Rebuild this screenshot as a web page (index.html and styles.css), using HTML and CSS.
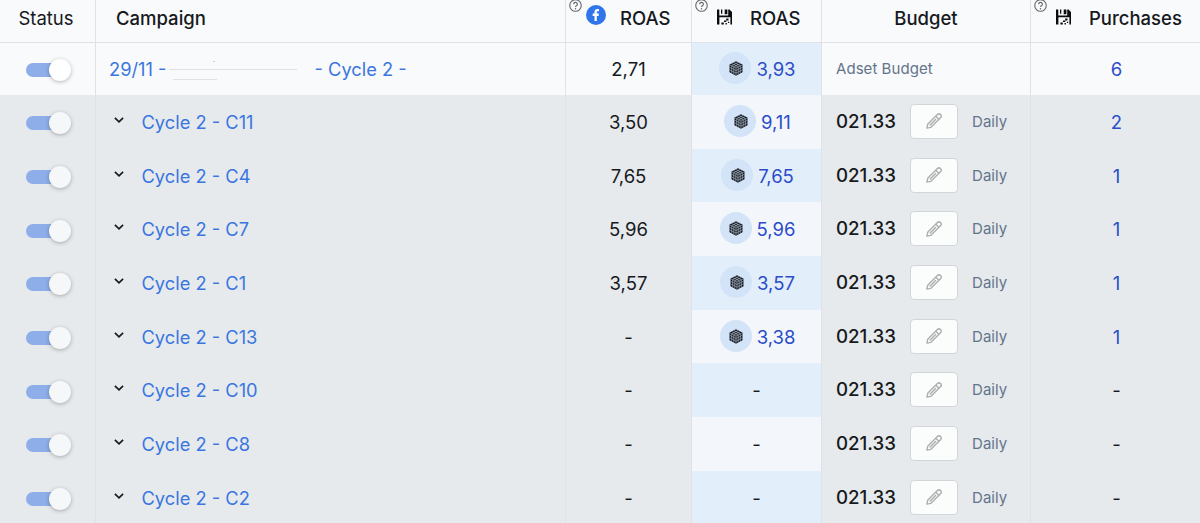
FILE: index.html
```html
<!DOCTYPE html>
<html lang="en">
<head>
    <meta charset="UTF-8">
    <meta name="viewport" content="width=device-width, initial-scale=1.0">
    <title>Campaigns</title>
    <link rel="stylesheet" href="styles.css">
</head>
<body>
    <svg class="sprite" aria-hidden="true">
        <symbol id="help" viewBox="0 0 14 14">
            <circle cx="7" cy="7" r="6.2" fill="none" stroke="currentColor" stroke-width="1.2"/>
            <path d="M5 5.600a2 2 0 1 1 3 1.700c-.7.4-1 .7-1 1.400" fill="none" stroke="currentColor" stroke-width="1.3"/>
            <circle cx="7" cy="10.400" r=".8" fill="currentColor"/>
        </symbol>
        <symbol id="facebook" viewBox="0 0 20 20">
            <circle cx="10" cy="10" r="10" fill="#3076ea"/>
            <path d="M8.500 16V10.900H6.700V8.600H8.500V7.200C8.500 5.100 9.600 4.100 11.500 4.100c.6 0 1.200.1 1.500.2v2h-1.100c-.8 0-1.100.4-1.100 1.100v1.200h2.100l-.35 2.300H10.800V16z" fill="#fff"/>
        </symbol>
        <symbol id="floppy" viewBox="0 0 15 16">
            <path d="M0 .5h2.300v6h8.900v-6h1.300L15 3v12.500h-1.600V8.200H2.400v7.300H0z" fill="#0b0c0e"/>
            <path d="M4 .5h1.300v4.200H4zM7.700.5h2.700v4.700H7.700zM9.200 9.600h2.300v2H9.200zM7 11.400h2.300v1.700H7zM4.400 13.500h2.400v2H4.400zM8.500 14h1.400v1.500H8.500zM10.900 12.800h1.300v1.200h-1.300z" fill="#0b0c0e"/>
        </symbol>
        <symbol id="cube" viewBox="0 0 14 15">
            <path d="M7 .3 13.500 3.600v7.700L7 14.700.5 11.300V3.600z" fill="#14181d"/>
            <path d="M.5 3.700 7 7l6.500-3.300M7 7v7.700M2.700 2.500 9.200 5.900v7.700M11.300 2.500 4.800 5.900v7.700M4.800 1.400l6.500 3.400v7.700M9.200 1.400 2.700 4.800v7.700M.5 6.200 7 9.500l6.500-3.300M.5 8.800 7 12.100l6.500-3.300" fill="none" stroke="#cbdcf3" stroke-width=".5"/>
        </symbol>
        <symbol id="pencil" viewBox="0 0 18 18">
            <path d="M1.900 16.100 2.700 12.300 12.400 2.600a2.150 2.150 0 0 1 3.100 3.100L5.700 15.400zM10.800 4.200l3.100 3.100M5.200 12.900l5.400-5.400" fill="none" stroke="currentColor" stroke-width="1.4" stroke-linejoin="round" stroke-linecap="round"/>
        </symbol>
        <symbol id="chevron" viewBox="0 0 10 6">
            <path d="M.9.900l4.100 3.900L9.100.9" fill="none" stroke="currentColor" stroke-width="1.700"/>
        </symbol>
    </svg>

    <div class="table">
        <div class="row header">
            <div class="cell status">Status</div>
            <div class="cell campaign">Campaign</div>
            <div class="cell fb-roas">
                <svg class="help"><use href="#help"/></svg>
                <svg class="fb-icon"><use href="#facebook"/></svg>
                <span>ROAS</span>
            </div>
            <div class="cell roas">
                <svg class="help"><use href="#help"/></svg>
                <svg class="floppy"><use href="#floppy"/></svg>
                <span>ROAS</span>
            </div>
            <div class="cell budget">Budget</div>
            <div class="cell purchases">
                <svg class="help"><use href="#help"/></svg>
                <svg class="floppy"><use href="#floppy"/></svg>
                <span>Purchases</span>
            </div>
        </div>

        <div class="row parent">
            <div class="cell status"><span class="toggle"></span></div>
            <div class="cell campaign">
                <a>29/11 -</a>
                <svg class="redacted" viewBox="0 0 130 24"><path d="M0 12.500h128M4 22.500h44" stroke="#dfe2e5"/><path d="M44 4.500h2" stroke="#c9ccd0"/></svg>
                <a>- Cycle 2 -</a>
            </div>
            <div class="cell fb-roas">2,71</div>
            <div class="cell roas"><span class="badge"><svg><use href="#cube"/></svg></span><a>3,93</a></div>
            <div class="cell budget"><span class="note">Adset Budget</span></div>
            <div class="cell purchases"><a>6</a></div>
        </div>

        <div class="row">
            <div class="cell status"><span class="toggle"></span></div>
            <div class="cell campaign"><svg class="chevron"><use href="#chevron"/></svg><a>Cycle 2 - C11</a></div>
            <div class="cell fb-roas">3,50</div>
            <div class="cell roas"><span class="badge"><svg><use href="#cube"/></svg></span><a>9,11</a></div>
            <div class="cell budget"><span class="amount">021.33</span><button class="edit"><svg><use href="#pencil"/></svg></button><span class="note">Daily</span></div>
            <div class="cell purchases"><a>2</a></div>
        </div>

        <div class="row">
            <div class="cell status"><span class="toggle"></span></div>
            <div class="cell campaign"><svg class="chevron"><use href="#chevron"/></svg><a>Cycle 2 - C4</a></div>
            <div class="cell fb-roas">7,65</div>
            <div class="cell roas"><span class="badge"><svg><use href="#cube"/></svg></span><a>7,65</a></div>
            <div class="cell budget"><span class="amount">021.33</span><button class="edit"><svg><use href="#pencil"/></svg></button><span class="note">Daily</span></div>
            <div class="cell purchases"><a>1</a></div>
        </div>

        <div class="row">
            <div class="cell status"><span class="toggle"></span></div>
            <div class="cell campaign"><svg class="chevron"><use href="#chevron"/></svg><a>Cycle 2 - C7</a></div>
            <div class="cell fb-roas">5,96</div>
            <div class="cell roas"><span class="badge"><svg><use href="#cube"/></svg></span><a>5,96</a></div>
            <div class="cell budget"><span class="amount">021.33</span><button class="edit"><svg><use href="#pencil"/></svg></button><span class="note">Daily</span></div>
            <div class="cell purchases"><a>1</a></div>
        </div>

        <div class="row">
            <div class="cell status"><span class="toggle"></span></div>
            <div class="cell campaign"><svg class="chevron"><use href="#chevron"/></svg><a>Cycle 2 - C1</a></div>
            <div class="cell fb-roas">3,57</div>
            <div class="cell roas"><span class="badge"><svg><use href="#cube"/></svg></span><a>3,57</a></div>
            <div class="cell budget"><span class="amount">021.33</span><button class="edit"><svg><use href="#pencil"/></svg></button><span class="note">Daily</span></div>
            <div class="cell purchases"><a>1</a></div>
        </div>

        <div class="row">
            <div class="cell status"><span class="toggle"></span></div>
            <div class="cell campaign"><svg class="chevron"><use href="#chevron"/></svg><a>Cycle 2 - C13</a></div>
            <div class="cell fb-roas">-</div>
            <div class="cell roas"><span class="badge"><svg><use href="#cube"/></svg></span><a>3,38</a></div>
            <div class="cell budget"><span class="amount">021.33</span><button class="edit"><svg><use href="#pencil"/></svg></button><span class="note">Daily</span></div>
            <div class="cell purchases"><a>1</a></div>
        </div>

        <div class="row">
            <div class="cell status"><span class="toggle"></span></div>
            <div class="cell campaign"><svg class="chevron"><use href="#chevron"/></svg><a>Cycle 2 - C10</a></div>
            <div class="cell fb-roas">-</div>
            <div class="cell roas">-</div>
            <div class="cell budget"><span class="amount">021.33</span><button class="edit"><svg><use href="#pencil"/></svg></button><span class="note">Daily</span></div>
            <div class="cell purchases">-</div>
        </div>

        <div class="row">
            <div class="cell status"><span class="toggle"></span></div>
            <div class="cell campaign"><svg class="chevron"><use href="#chevron"/></svg><a>Cycle 2 - C8</a></div>
            <div class="cell fb-roas">-</div>
            <div class="cell roas">-</div>
            <div class="cell budget"><span class="amount">021.33</span><button class="edit"><svg><use href="#pencil"/></svg></button><span class="note">Daily</span></div>
            <div class="cell purchases">-</div>
        </div>

        <div class="row">
            <div class="cell status"><span class="toggle"></span></div>
            <div class="cell campaign"><svg class="chevron"><use href="#chevron"/></svg><a>Cycle 2 - C2</a></div>
            <div class="cell fb-roas">-</div>
            <div class="cell roas">-</div>
            <div class="cell budget"><span class="amount">021.33</span><button class="edit"><svg><use href="#pencil"/></svg></button><span class="note">Daily</span></div>
            <div class="cell purchases">-</div>
        </div>
    </div>
</body>
</html>
```
FILE: styles.css
```css
:root {
    --light: #f8fafc;
    --row: #e6eaed;
    --border: #dfe3e8;
    --row-border: #dfe3e7;
    --dark: #17191c;
    --link: #3b76e0;
    --link-dark: #2b4dc8;
    --gray: #64748b;
}

* {
    margin: 0;
    padding: 0;
    box-sizing: border-box;
}

body {
    background-color: var(--row);
    color: var(--dark);
    font-family: Inter, sans-serif;
    font-size: 18.5px;
    line-height: 24px;
    height: 523px;
    overflow: hidden;
}

.sprite {
    display: none;
}

.row {
    display: grid;
    grid-template-columns: 96px 470px 126px 130px 209px 169px;
    height: 53.67px;
}

.cell {
    display: flex;
    align-items: center;
    justify-content: center;
    border-right: 1px solid var(--row-border);
    white-space: pre;
}

.cell:last-child {
    border-right: none;
}

/* header */
.header {
    height: 42.5px;
    background-color: var(--light);
    border-bottom: 1px solid var(--border);
    font-weight: 500;
}

.header .cell {
    position: relative;
    padding-bottom: 6px;
    border-color: var(--border);
}

.header .status {
    font-weight: 400;
    padding-right: 3px;
}

.header .campaign {
    padding-left: 20px;
}

.header .fb-roas,
.header .roas,
.header .purchases {
    justify-content: flex-start;
}

.header .fb-roas {
    padding-left: 20px;
    gap: 14px;
}

.header .roas {
    padding-left: 25px;
    gap: 18px;
}

.header .purchases {
    padding-left: 25px;
    gap: 18px;
}

.help {
    position: absolute;
    top: -1px;
    left: 3px;
    width: 13px;
    height: 13px;
    color: #66696d;
}

.fb-icon {
    width: 20px;
    height: 20px;
    margin-bottom: 6px;
}

.floppy {
    width: 15px;
    height: 16px;
    margin-bottom: 1px;
}

/* campaign total */
.parent {
    height: 52.67px;
    background-color: var(--light);
}

.parent .cell {
    border-color: var(--border);
}

.row .campaign {
    justify-content: flex-start;
}

.parent .campaign {
    padding-left: 13px;
}

.redacted {
    width: 130px;
    height: 24px;
    margin: 0 16px 0 2px;
}

a {
    color: var(--link);
}

.campaign a {
    font-size: 18.3px;
}

.roas a,
.purchases a {
    color: var(--link-dark);
}

.row:not(.header) .purchases {
    padding-left: 2px;
}

/* adset rows */
.campaign .chevron {
    width: 10px;
    height: 6px;
    margin: 0 17.5px 4px 18px;
}

.row:nth-child(even) .roas {
    background-color: #e2eefa;
}

.row:nth-child(odd):not(.header) .roas {
    background-color: #f3f7fc;
}

.toggle {
    position: relative;
    width: 44px;
    height: 14px;
    margin-top: 3px;
    border-radius: 7px;
    background: linear-gradient(to right, #8eaee9 36px, transparent 36px);
}

.toggle::after {
    content: "";
    position: absolute;
    top: -4px;
    right: -1px;
    width: 22px;
    height: 22px;
    border-radius: 50%;
    background-color: #f5f7f9;
    box-shadow: 0 1px 4px rgba(0, 0, 0, 0.28);
}

.parent .toggle::after {
    background-color: #fff;
}

.badge {
    display: flex;
    align-items: center;
    justify-content: center;
    width: 32px;
    height: 32px;
    margin: 0 5px 2px 2px;
    border-radius: 50%;
    background-color: #d3e3f8;
}

.badge svg {
    width: 14px;
    height: 15px;
    margin: 1px 0 0 1px;
}

.row:not(.header) .budget {
    justify-content: flex-start;
    padding-left: 14px;
}

.amount {
    width: 74px;
    font-size: 18.7px;
    font-weight: 500;
}

.edit {
    display: flex;
    align-items: center;
    justify-content: center;
    width: 48px;
    height: 35px;
    margin: 0 14px 1px 0;
    border: 1px solid #d3d6d9;
    border-radius: 4px;
    background-color: #fbfcfc;
    color: #acaeb0;
}

.edit svg {
    width: 18px;
    height: 18px;
}

.note {
    color: var(--gray);
    font-size: 15px;
    letter-spacing: 0.05px;
}
```
